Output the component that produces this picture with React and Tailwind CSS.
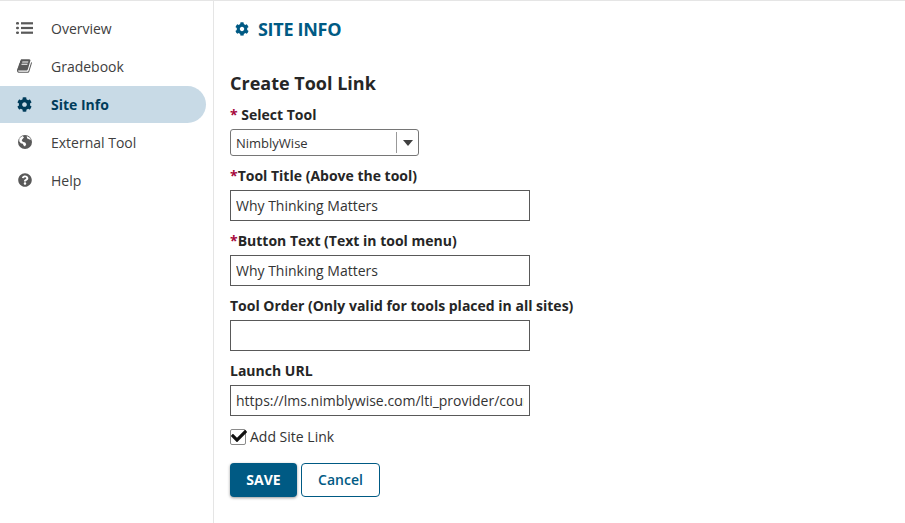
import React from 'react';
import { FaCog, FaQuestionCircle, FaCheck } from 'react-icons/fa';

const ListIcon = () => (
  <svg width="17" height="14" viewBox="0 0 17 14" fill="currentColor">
    <rect x="0" y="1" width="3" height="2.6" rx="1.2" />
    <rect x="0" y="5.7" width="3" height="2.6" rx="1.2" />
    <rect x="0" y="10.4" width="3" height="2.6" rx="1.2" />
    <rect x="5" y="1.2" width="12" height="2.2" />
    <rect x="5" y="5.9" width="12" height="2.2" />
    <rect x="5" y="10.6" width="12" height="2.2" />
  </svg>
);

const BookIcon = () => (
  <svg width="16" height="16" viewBox="0 0 1792 1792" fill="currentColor">
    <path d="M1639 478q40 57 18 129l-275 906q-19 64-76.5 107.5t-122.5 43.5h-923q-77 0-148.5-53.5t-99.5-131.5q-24-67-2-127 0-4 3-27t4-37q1-8-3-21.5t-3-19.5q2-11 8-21t16.5-23.5 16.5-23.5q23-38 45-91.5t30-91.5q3-10 .5-30t-.5-28q3-11 17-28t17-23q21-36 42-92t25-90q1-9-2.5-32t.5-28q4-13 22-30.5t22-22.5q19-26 42.5-84.5t27.5-96.5q1-8-3-25.5t-2-26.5q2-8 9-18t18-23 17-21q8-12 16.5-30.5t15-35 16-36 19.5-32 26.5-23.5 36-11.5 47.5 5.5l-1 3q38-9 51-9h761q74 0 114 56t18 130l-274 906q-36 119-71.5 153.5t-128.5 34.5h-869q-27 0-38 15-11 16-1 43 24 70 144 70h923q29 0 56-15.5t35-41.5l300-987q7-22 5-57 38 15 59 43zm-1064 2q-4 13 2 22.5t20 9.5h608q13 0 25.5-9.5t16.5-22.5l21-64q4-13-2-22.5t-20-9.5h-608q-13 0-25.5 9.5t-16.5 22.5zm-83 256q-4 13 2 22.5t20 9.5h608q13 0 25.5-9.5t16.5-22.5l21-64q4-13-2-22.5t-20-9.5h-608q-13 0-25.5 9.5t-16.5 22.5z" />
  </svg>
);

// rough fa-globe: solid disc with the land cut out in white
const GlobeIcon = () => (
  <svg width="14" height="14" viewBox="0 0 14 14">
    <circle cx="7" cy="7" r="7" fill="currentColor" />
    <path
      d="M1.4 3.2 L4.4 0.9 L6 2.2 L4.8 3.8 L4 4.8 L3.8 6 L5.4 7 L7.2 7.6 L8.2 9.2 L7 11.4 L5.6 10.4 L4.8 8.8 L2.8 8.2 L1.2 6.2 Z M8.8 1 L12.2 3 L12.8 5 L11 4.2 L9 3.2 Z"
      fill="#fff"
    />
  </svg>
);

const navItems = [
  { label: 'Overview', icon: <ListIcon /> },
  { label: 'Gradebook', icon: <BookIcon /> },
  { label: 'Site Info', icon: <FaCog size={15} />, active: true },
  { label: 'External Tool', icon: <GlobeIcon /> },
  { label: 'Help', icon: <FaQuestionCircle size={14} /> },
];

const Star = () => <span className="text-[#a6093d]">*</span>;

const TextField = ({ label, value }) => (
  <div className="mt-[10px]">
    <label className="block h-[19px] text-[14px] leading-[19px] font-bold text-[#262626]">{label}</label>
    <input
      readOnly
      value={value}
      className="mt-[5px] block h-[31px] w-[300px] border border-[#595959] px-[5px] text-[14px] text-[#333] outline-none"
    />
  </div>
);

const App = () => {
  return (
    <div className="flex h-[523px] w-[905px] overflow-hidden border-t border-[#e5e5e5] bg-white font-['Open_Sans',sans-serif]">
      {/* Sidebar */}
      <aside className="h-full w-[214px] shrink-0 border-r border-[#e5e5e5] pt-[8px] pr-[7px]">
        {navItems.map((item) => (
          <div
            key={item.label}
            className={
              item.active
                ? 'mt-px flex h-[37px] items-center rounded-r-[19px] bg-[#c8dae6] text-[14px] font-bold text-[#003c5b]'
                : 'flex h-[38px] items-center text-[14px] text-[#404040]'
            }
          >
            <span className={item.active ? 'flex w-[51px] justify-center pr-[2px] text-[#003c5b]' : 'flex w-[51px] justify-center pr-[2px] text-[#595959]'}>
              {item.icon}
            </span>
            {item.label}
          </div>
        ))}
      </aside>

      {/* Main */}
      <main className="flex-1 pl-[16px]">
        <h1 className="mt-[15px] flex h-[26px] items-center pl-[5px] text-[18px] font-bold text-[#005a84]">
          <FaCog size={14} className="mr-[9px]" />
          <span className="tracking-[-0.3px]">SITE INFO</span>
        </h1>
        <h2 className="mt-[29px] h-[25px] text-[18px] leading-[25px] font-bold text-[#262626]">Create Tool Link</h2>

        <div className="mt-[9px] h-[19px] text-[14px] leading-[19px] font-bold text-[#262626]">
          <Star /> Select Tool
        </div>
        <div className="mt-[5px] flex h-[27px] w-[189px] items-center rounded-[3px] border border-[#767676] text-[13px] text-[#333]">
          <span className="flex-1 pt-[2px] pl-[5px]">NimblyWise</span>
          <span className="h-[21px] w-px bg-[#999]" />
          <span className="flex w-[21px] justify-center">
            <span className="h-0 w-0 border-x-[5.5px] border-t-[6px] border-x-transparent border-t-[#404040]" />
          </span>
        </div>

        <TextField label={<><Star />Tool Title (Above the tool)</>} value="Why Thinking Matters" />
        <TextField label={<><Star />Button Text (Text in tool menu)</>} value="Why Thinking Matters" />
        <TextField label="Tool Order (Only valid for tools placed in all sites)" value="" />
        <TextField label="Launch URL" value="https://lms.nimblywise.com/lti_provider/course" />

        <div className="mt-[10px] flex h-[20px] items-center text-[14px] text-[#333]">
          <span className="relative mt-px mr-[4px] h-[16px] w-[16px] rounded-[2px] border border-[#8a8a8a] bg-white">
            <FaCheck size={16} className="absolute top-[-2px] left-[0px] text-[#111]" />
          </span>
          Add Site Link
        </div>

        <div className="mt-[17px] flex gap-[4px]">
          <button className="h-[34px] w-[67px] rounded-[4px] bg-[#005a84] pb-px text-[14px] font-bold text-white shadow-[0_1px_3px_rgba(0,0,0,0.4)]">
            SAVE
          </button>
          <button className="h-[34px] w-[79px] rounded-[4px] border border-[#005a84] bg-white pb-[2px] text-[14px] font-semibold text-[#005a84]">
            Cancel
          </button>
        </div>
      </main>
    </div>
  );
};

export default App;
